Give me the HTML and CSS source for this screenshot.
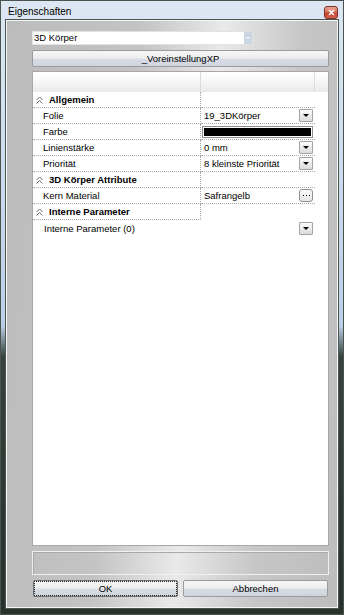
FILE: index.html
```html
<!DOCTYPE html>
<html lang="de">
<head>
    <meta charset="UTF-8">
    <title>Eigenschaften</title>
    <link rel="stylesheet" href="styles.css">
</head>
<body>
<div class="window">
    <div class="titlebar">
        <span class="title">Eigenschaften</span>
        <span class="close-btn">
            <svg width="7" height="7" viewBox="0 0 7 7"><path d="M1 1L6 6M6 1L1 6" stroke="#fff" stroke-width="1.7"/></svg>
        </span>
    </div>
    <div class="client">
        <div class="combo">
            <span class="combo-text">3D Körper</span>
            <span class="combo-arrow"></span>
        </div>
        <button class="btn preset">_VoreinstellungXP</button>

        <div class="grid">
            <div class="grid-head">
                <div class="head-name"></div>
                <div class="head-value"></div>
            </div>

            <div class="row section">
                <div class="cell name"><svg class="chev" width="7" height="8" viewBox="0 0 7 8"><path d="M0.5 4L3.5 1L6.5 4M0.5 7.5L3.5 4.5L6.5 7.5" fill="none" stroke="#6d6d6d" stroke-width="1"/></svg>Allgemein</div>
                <div class="cell value"></div>
            </div>
            <div class="row">
                <div class="cell name">Folie</div>
                <div class="cell value">19_3DKörper<span class="drop"></span></div>
            </div>
            <div class="row">
                <div class="cell name">Farbe</div>
                <div class="cell value"><span class="swatch"><span class="swatch-fill"></span></span></div>
            </div>
            <div class="row">
                <div class="cell name">Linienstärke</div>
                <div class="cell value">0 mm<span class="drop"></span></div>
            </div>
            <div class="row">
                <div class="cell name">Priorität</div>
                <div class="cell value">8 kleinste Priorität<span class="drop"></span></div>
            </div>
            <div class="row section">
                <div class="cell name"><svg class="chev" width="7" height="8" viewBox="0 0 7 8"><path d="M0.5 4L3.5 1L6.5 4M0.5 7.5L3.5 4.5L6.5 7.5" fill="none" stroke="#6d6d6d" stroke-width="1"/></svg>3D Körper Attribute</div>
                <div class="cell value"></div>
            </div>
            <div class="row">
                <div class="cell name">Kern Material</div>
                <div class="cell value">Safrangelb<span class="dots"><svg width="7" height="2" viewBox="0 0 7 2"><rect x="0" y="0" width="1" height="1" fill="#000"/><rect x="3" y="0" width="1" height="1" fill="#000"/><rect x="6" y="0" width="1" height="1" fill="#000"/></svg></span></div>
            </div>
            <div class="row section last-section">
                <div class="cell name"><svg class="chev" width="7" height="8" viewBox="0 0 7 8"><path d="M0.5 4L3.5 1L6.5 4M0.5 7.5L3.5 4.5L6.5 7.5" fill="none" stroke="#6d6d6d" stroke-width="1"/></svg>Interne Parameter</div>
                <div class="cell value"></div>
            </div>
            <div class="row wide">
                <div class="cell full">Interne Parameter (0)<span class="drop"></span></div>
            </div>
        </div>

        <div class="desc"></div>

        <div class="actions">
            <button class="btn ok">OK</button>
            <button class="btn">Abbrechen</button>
        </div>
    </div>
</div>
</body>
</html>
```

FILE: styles.css
```css
* {
    box-sizing: border-box;
}
body {
    margin: 0;
    font-family: "Liberation Sans", Arial, sans-serif;
    font-size: 9.5px;
    color: #000;
}
.window {
    width: 344px;
    height: 615px;
    display: flex;
    flex-direction: column;
    border: 1px solid #48544d;
    padding: 0 5px 6px 5px;
    background: linear-gradient(to bottom, #dde7f3 0%, #cbdaec 30%, #bccfe6 53%, #36423b 58%, #28312c 100%);
}
.titlebar {
    height: 19px;
    display: flex;
    align-items: center;
    justify-content: space-between;
    padding: 1px 0 0 2px;
}
.title {
    font-size: 10px;
}
.close-btn {
    width: 14px;
    height: 13px;
    margin-top: 2px;
    display: flex;
    align-items: center;
    justify-content: center;
    border: 1px solid #7a3328;
    border-radius: 3px;
    background: linear-gradient(to bottom, #eba493 0%, #d9725d 45%, #c5402b 55%, #d4654d 100%);
}
.client {
    flex: 1;
    display: flex;
    flex-direction: column;
    border: 1px solid #f5f5f5;
    box-shadow: 0 0 0 1px #4a564f;
    padding: 10px 8px 10px 25px;
    background: linear-gradient(95deg, #bcbcbc 0%, #c3c3c3 35%, #e9e9e9 57%, #c6c6c6 78%, #bdbdbd 100%);
}
.combo {
    width: 221px;
    height: 14px;
    display: flex;
    background: #fff;
    border: 1px solid #e2e2e2;
}
.combo-text {
    flex: 1;
    padding-left: 1px;
    line-height: 12px;
}
.combo-arrow {
    width: 8px;
    background: #ccd6e3;
    position: relative;
}
.combo-arrow::after {
    content: "";
    position: absolute;
    left: 2px;
    top: 5px;
    border-top: 2px solid #f2f5f9;
    border-left: 2px solid transparent;
    border-right: 2px solid transparent;
}
.btn {
    font-family: inherit;
    font-size: 9.5px;
    color: #000;
    height: 17px;
    padding: 0;
    border: 1px solid #9a9b9c;
    border-radius: 2px;
    background: linear-gradient(to bottom, #f6f6f6 0%, #eeeeee 48%, #d9dde6 52%, #cfd4de 100%);
}
.preset {
    margin-top: 5px;
    width: 100%;
}
.grid {
    margin-top: 4px;
    flex: 1;
    background: #fff;
    border: 1px solid #a7a7a7;
}
.grid-head {
    height: 20px;
    display: flex;
    background: linear-gradient(to bottom, #ffffff 0%, #f6f6f6 50%, #e9e9e9 100%);
}
.head-name {
    width: 168px;
    border-right: 1px solid #dcdcdc;
}
.head-value {
    width: 114px;
    border-right: 1px solid #dcdcdc;
}
.row {
    height: 16px;
    display: flex;
}
.cell {
    height: 16px;
    line-height: 15px;
    border-bottom: 1px dotted #a9a9a9;
}
.name {
    width: 168px;
    padding-left: 10px;
    border-right: 1px dotted #a9a9a9;
    white-space: nowrap;
}
.value {
    width: 114px;
    padding-left: 3px;
    display: flex;
    align-items: center;
    justify-content: space-between;
    padding-right: 2px;
}
.section .name {
    padding-left: 3px;
    font-weight: bold;
    display: flex;
    align-items: center;
}
.chev {
    margin-right: 6px;
}
.last-section .value {
    border-bottom: none;
}
.full {
    width: 282px;
    padding-left: 11px;
    padding-right: 2px;
    border-bottom: none;
    display: flex;
    align-items: center;
    justify-content: space-between;
}
.drop {
    width: 14px;
    height: 13px;
    border: 1px solid #a3a3a3;
    border-radius: 1px;
    background: linear-gradient(to bottom, #fbfbfb 0%, #ececec 50%, #dadada 100%);
    display: flex;
    align-items: center;
    justify-content: center;
}
.drop::after {
    content: "";
    border-top: 3px solid #000;
    border-left: 3px solid transparent;
    border-right: 3px solid transparent;
}
.dots {
    width: 14px;
    height: 13px;
    border: 1px solid #8e8e8e;
    border-radius: 3px;
    background: linear-gradient(to bottom, #fbfbfb 0%, #e6e6e6 100%);
    display: flex;
    align-items: flex-end;
    justify-content: center;
    padding-bottom: 4px;
}
.dots svg {
    display: block;
}
.swatch {
    width: 111px;
    height: 12px;
    margin-left: -2px;
    padding: 1px;
    border: 1px solid #8d8d8d;
    background: #fff;
}
.swatch-fill {
    display: block;
    height: 100%;
    background: #000;
}
.desc {
    margin-top: 5px;
    height: 24px;
    border: 1px solid #f0f0f0;
    box-shadow: inset 1px 1px 0 #a9a9a9;
}
.actions {
    margin-top: 5px;
    display: flex;
    gap: 5px;
    padding: 0 1px;
}
.actions .btn {
    flex: 1;
}
.ok {
    outline: 1px dotted #222;
    outline-offset: -2px;
    border-color: #6d6e70;
}
```
